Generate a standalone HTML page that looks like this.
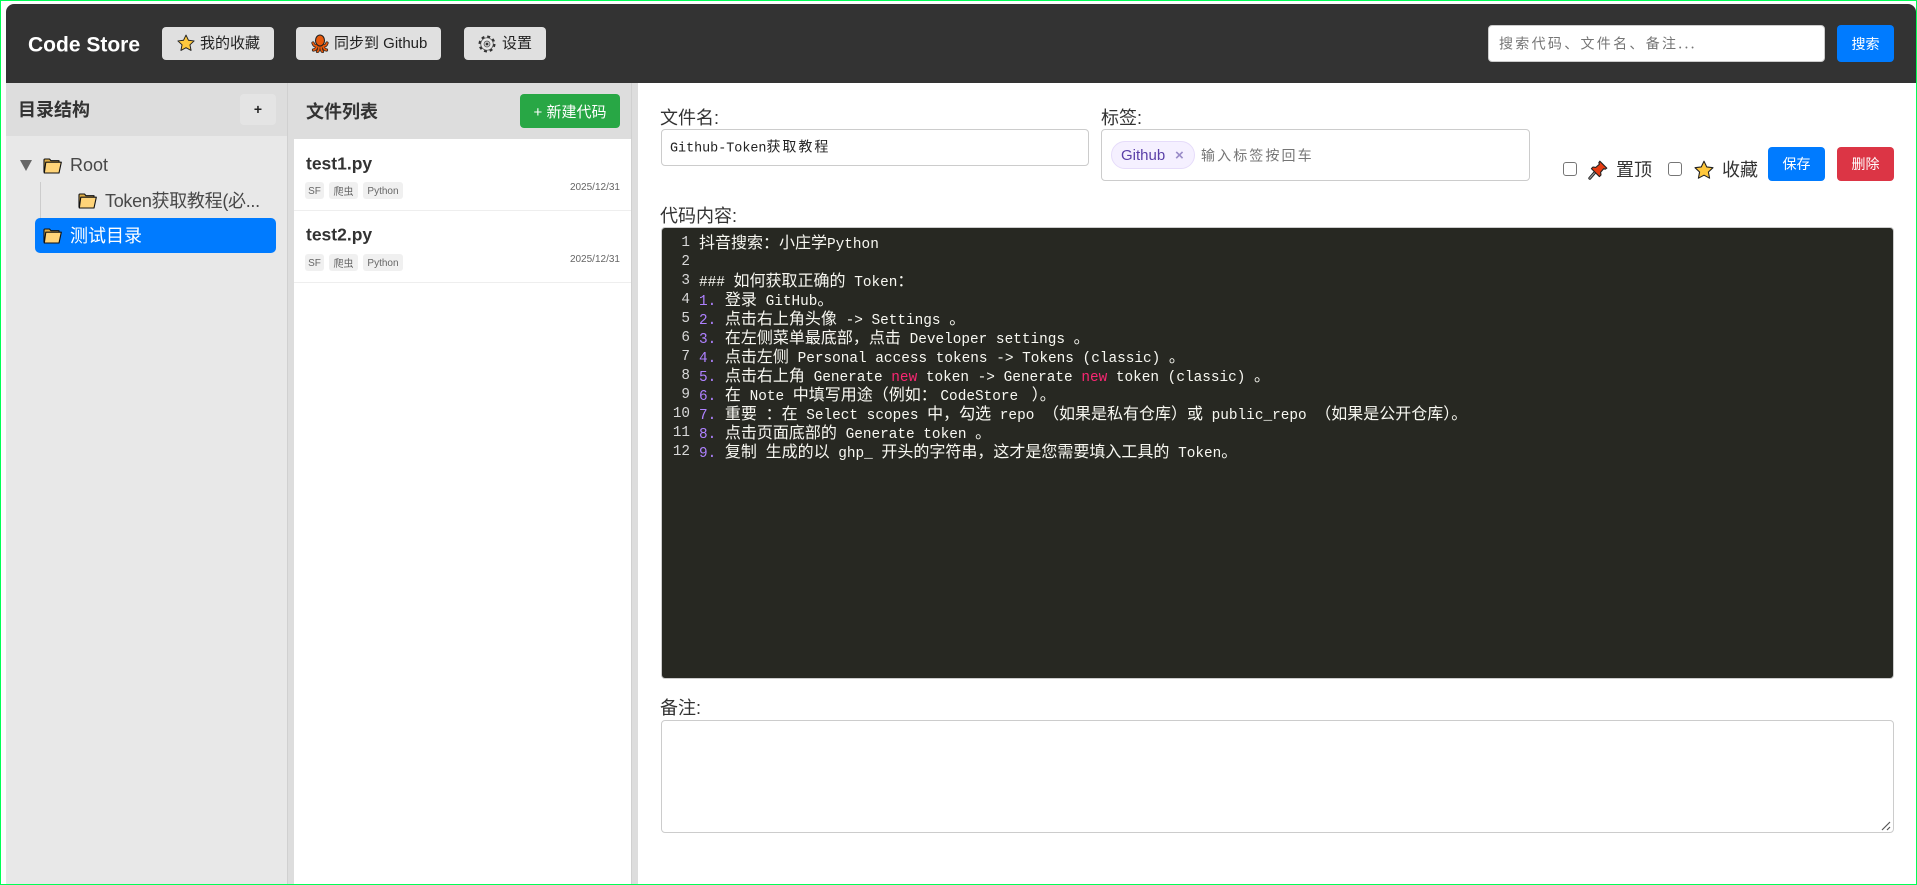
<!DOCTYPE html>
<html lang="zh-CN"><head><meta charset="utf-8"><title>Code Store</title>
<style>
html,body{margin:0;padding:0;width:1917px;height:885px;overflow:hidden;background:#fff}
body{position:relative;font-family:"Liberation Sans","Noto Sans CJK SC",sans-serif;color:#333}
.a{position:absolute;white-space:nowrap;box-sizing:border-box}
.t{position:absolute;white-space:nowrap;transform:translateY(-50%);line-height:1.2}
.btn{border-radius:4px;font-size:14px;display:flex;align-items:center;justify-content:center}
.hb{background:#e0e0e0;color:#222;top:27px;height:33px;border-radius:4px}
.lab{font-size:18px;color:#333}
.box{background:#fff;border:1px solid #ccc;border-radius:4px}
.tag{top:182px;height:17px;background:#f0f0f0;color:#666;font-size:10px;border-radius:3px;display:flex;align-items:center;justify-content:center}
.tl{padding-top:1px}
.tree{font-size:18px;color:#484848}
.cb{width:14px;height:14px;border:1.300px solid #767676;border-radius:3px;background:#fff;top:162px}
.code{position:absolute;left:699px;height:19px;line-height:19px;margin-top:-1px;font-family:"Liberation Mono",monospace;font-size:14.4px;color:#f8f8f2;white-space:pre}
.code i{font-style:normal;font-family:"Noto Sans CJK SC",sans-serif;font-size:16px;font-weight:400}
.code b{font-weight:400;color:#ae81ff}
.code s{text-decoration:none;color:#f92672}
.n{position:absolute;left:661px;width:29px;height:19px;line-height:19px;margin-top:1px;text-align:right;font-family:"Liberation Mono",monospace;font-size:14.3px;color:#d8d8d8}
svg{position:absolute;display:block}
</style></head><body>
<svg width="0" height="0" style="position:absolute"><defs>
<symbol id="star" viewBox="0 0 20 20"><path d="M10 1.200l2.700 5.700 6.300.8-4.600 4.300 1.200 6.200L10 15.200l-5.600 3 1.200-6.200L1 7.700l6.300-.8z" fill="#ffc83d" stroke="#222" stroke-width="1.100" stroke-linejoin="round"/></symbol>
<symbol id="folder" viewBox="0 0 19 16"><path d="M1 14.500V2c0-.6.400-1 1-1h4.500l1.500 1.700h8V4.500" fill="#e0ad45" stroke="#111" stroke-width="1.100" stroke-linejoin="round"/><path d="M1.300 15L2.800 4.200H18.300L16 15z" fill="#ffd479" stroke="#111" stroke-width="1.100" stroke-linejoin="round"/></symbol>
</defs></svg>

<!-- window outline -->
<div class="a" style="left:0;top:0;width:1917px;height:885px;border:1px solid #00ff55;z-index:9;pointer-events:none"></div>

<!-- header -->
<div class="a" style="left:6px;top:4px;width:1910px;height:79px;background:#333;border-radius:8px 8px 0 0"></div>
<div class="t" style="left:28px;top:45px;font-size:21px;font-weight:700;color:#fff">Code Store</div>

<div class="a hb" style="left:162px;width:112px"></div>
<svg style="left:177px;top:34px" width="18" height="18"><use href="#star"/></svg>
<div class="t" style="left:200px;top:44px;font-size:15px;color:#222">我的收藏</div>

<div class="a hb" style="left:296px;width:145px"></div>
<svg style="left:311px;top:34px" width="18" height="19" viewBox="0 0 18 19"><g fill="none" stroke="#222" stroke-width="3.200" stroke-linecap="round"><path d="M7 10C5 13 3 12 2 9"/><path d="M11 10C13 13 15 12 16 9"/><path d="M6.500 11C5.500 15 4 16 2.500 16"/><path d="M11.500 11C12.500 15 14 16 15.500 16"/><path d="M8 11C8 15 7.500 17 6.500 17.500"/><path d="M10 11C10 15 10.500 17 11.500 17.500"/></g><g fill="none" stroke="#e8590c" stroke-width="1.800" stroke-linecap="round"><path d="M7 10C5 13 3 12 2 9"/><path d="M11 10C13 13 15 12 16 9"/><path d="M6.500 11C5.500 15 4 16 2.500 16"/><path d="M11.500 11C12.500 15 14 16 15.500 16"/><path d="M8 11C8 15 7.500 17 6.500 17.500"/><path d="M10 11C10 15 10.500 17 11.500 17.500"/></g><ellipse cx="9" cy="6.500" rx="4.500" ry="5.500" fill="#e8590c" stroke="#222" stroke-width="1.100"/></svg>
<div class="t" style="left:334px;top:44px;font-size:15px;color:#222">同步到 Github</div>

<div class="a hb" style="left:464px;width:82px"></div>
<svg style="left:478px;top:35px" width="18" height="18" viewBox="0 0 18 18"><circle cx="9" cy="9" r="7.300" fill="none" stroke="#333" stroke-width="2.400" stroke-dasharray="2.900 2.830"/><circle cx="9" cy="9" r="6.200" fill="#e8e8e8" stroke="#444" stroke-width=".7"/><circle cx="9" cy="9" r="3" fill="#c4c4c4" stroke="#555" stroke-width=".7"/><circle cx="9" cy="9" r="1.300" fill="#333"/></svg>
<div class="t" style="left:502px;top:44px;font-size:15px;color:#222">设置</div>

<div class="a" style="left:1488px;top:25px;width:337px;height:37px;background:#fff;border:1px solid #ccc;border-radius:4px"></div>
<div class="t" style="left:1499px;top:44px;font-size:14px;letter-spacing:2.300px;color:#757575;font-family:'Noto Sans CJK SC',sans-serif">搜索代码、文件名、备注...</div>
<div class="a btn" style="left:1837px;top:25px;width:57px;height:37px;background:#007bff;color:#fff">搜索</div>

<!-- sidebar -->
<div class="a" style="left:6px;top:83px;width:281px;height:801px;background:#e8e8e8"></div>
<div class="a" style="left:6px;top:83px;width:281px;height:53px;background:#ddd"></div>
<div class="t" style="left:18px;top:111px;font-size:18px;font-weight:700;color:#333">目录结构</div>
<div class="a btn" style="left:240px;top:94px;width:36px;height:31px;background:#e4e4e4;color:#222;font-size:14px;padding-bottom:2px;font-weight:700">+</div>

<svg style="left:20px;top:160px" width="12" height="11"><path d="M0 0H12L6 11z" fill="#666"/></svg>
<svg style="left:43px;top:158px" width="19" height="16"><use href="#folder"/></svg>
<div class="t tree" style="left:70px;top:166px">Root</div>
<div class="a" style="left:40px;top:182px;width:1px;height:36px;background:#ccc"></div>
<svg style="left:78px;top:193px" width="19" height="16"><use href="#folder"/></svg>
<div class="t tree" style="left:105px;top:202px;letter-spacing:-.3px">Token获取教程(必...</div>
<div class="a" style="left:35px;top:218px;width:241px;height:35px;background:#007bff;border-radius:5px"></div>
<svg style="left:43px;top:228px" width="19" height="16"><use href="#folder"/></svg>
<div class="t tree" style="left:70px;top:237px;color:#fff">测试目录</div>

<div class="a" style="left:287px;top:83px;width:7px;height:801px;background:#ddd;border-left:1px solid #d0d0d0"></div>

<!-- file list -->
<div class="a" style="left:294px;top:83px;width:337px;height:56px;background:#ddd"></div>
<div class="t" style="left:306px;top:113px;font-size:18px;font-weight:700;color:#333">文件列表</div>
<div class="a btn" style="left:520px;top:94px;width:100px;height:34px;background:#28a745;color:#fff;font-size:15px">+ 新建代码</div>

<div class="t" style="left:306px;top:164px;font-size:17.500px;font-weight:700;color:#333">test1.py</div>
<div class="a tag tl" style="left:305px;width:19px">SF</div>
<div class="a tag" style="left:329px;width:29px">爬虫</div>
<div class="a tag tl" style="left:363px;width:40px">Python</div>
<div class="t" style="right:1297px;top:188px;font-size:10px;color:#666">2025/12/31</div>
<div class="a" style="left:294px;top:210px;width:337px;height:1px;background:#eee"></div>

<div class="t" style="left:306px;top:235px;font-size:17.500px;font-weight:700;color:#333">test2.py</div>
<div class="a tag tl" style="left:305px;width:19px;top:254px">SF</div>
<div class="a tag" style="left:329px;width:29px;top:254px">爬虫</div>
<div class="a tag tl" style="left:363px;width:40px;top:254px">Python</div>
<div class="t" style="right:1297px;top:260px;font-size:10px;color:#666">2025/12/31</div>
<div class="a" style="left:294px;top:282px;width:337px;height:1px;background:#eee"></div>

<div class="a" style="left:631px;top:83px;width:7px;height:801px;background:#ddd;border-left:1px solid #d0d0d0"></div>

<!-- editor -->
<div class="t lab" style="left:660px;top:119px">文件名:</div>
<div class="a box" style="left:661px;top:129px;width:428px;height:37px"></div>
<div class="t" style="left:670px;top:148px;font-family:'Liberation Mono',monospace;font-size:13.4px;color:#222">Github-Token<span style="font-family:'Noto Sans CJK SC',sans-serif;font-size:14px;letter-spacing:2px">获取教程</span></div>

<div class="t lab" style="left:1101px;top:119px">标签:</div>
<div class="a box" style="left:1101px;top:129px;width:429px;height:52px"></div>
<div class="a" style="left:1111px;top:141px;width:84px;height:28px;background:#f5f0ff;border:1px solid #e6dcfa;border-radius:14px"></div>
<div class="t" style="left:1121px;top:156px;font-size:15px;color:#5a3fa8">Github</div>
<div class="t" style="left:1175px;top:156px;font-size:15px;font-weight:700;color:#9a8cc8">×</div>
<div class="t" style="left:1201px;top:156px;font-size:14px;letter-spacing:2.100px;color:#757575;font-family:'Noto Sans CJK SC',sans-serif">输入标签按回车</div>

<div class="a cb" style="left:1563px"></div>
<svg style="left:1588px;top:160px" width="20" height="20" viewBox="0 0 20 20"><path d="M1.800 18.200L6.800 12.500" stroke="#222" stroke-width="3" stroke-linecap="round"/><path d="M1.800 18.200L6.800 12.500" stroke="#999" stroke-width="1.200" stroke-linecap="round"/><path d="M11.800 1.200L18.800 8.200 17.200 9.200 15.800 8.600 12.600 12.200 13 15 11.400 16.600 3.400 8.600 5 7 7.800 7.400 11.400 4.200 10.800 2.800z" fill="#e63c12" stroke="#222" stroke-width="1.100" stroke-linejoin="round"/></svg>
<div class="t" style="left:1616px;top:171px;font-size:18px;color:#333">置顶</div>
<div class="a cb" style="left:1668px"></div>
<svg style="left:1694px;top:160px" width="20" height="20"><use href="#star"/></svg>
<div class="t" style="left:1722px;top:171px;font-size:18px;color:#333">收藏</div>
<div class="a btn" style="left:1768px;top:147px;width:57px;height:34px;background:#007bff;color:#fff">保存</div>
<div class="a btn" style="left:1837px;top:147px;width:57px;height:34px;background:#dc3545;color:#fff">删除</div>

<div class="t lab" style="left:660px;top:217px">代码内容:</div>
<div class="a" style="left:661px;top:227px;width:1233px;height:452px;background:#272822;border:1px solid #ccc;border-radius:4px"></div>

<div class="n" style="top:233px">1</div><div class="code" style="top:233px"><i>抖音搜索：小庄学</i>Python</div>
<div class="n" style="top:252px">2</div>
<div class="n" style="top:271px">3</div><div class="code" style="top:271px">### <i>如何获取正确的</i> Token<i>：</i></div>
<div class="n" style="top:290px">4</div><div class="code" style="top:290px"><b>1.</b> <i>登录</i> GitHub<i>。</i></div>
<div class="n" style="top:309px">5</div><div class="code" style="top:309px"><b>2.</b> <i>点击右上角头像</i> -&gt; Settings <i>。</i></div>
<div class="n" style="top:328px">6</div><div class="code" style="top:328px"><b>3.</b> <i>在左侧菜单最底部，点击</i> Developer settings <i>。</i></div>
<div class="n" style="top:347px">7</div><div class="code" style="top:347px"><b>4.</b> <i>点击左侧</i> Personal access tokens -&gt; Tokens (classic) <i>。</i></div>
<div class="n" style="top:366px">8</div><div class="code" style="top:366px"><b>5.</b> <i>点击右上角</i> Generate <s>new</s> token -&gt; Generate <s>new</s> token (classic) <i>。</i></div>
<div class="n" style="top:385px">9</div><div class="code" style="top:385px"><b>6.</b> <i>在</i> Note <i>中填写用途（例如：</i> <span style="margin-left:-5px;margin-right:5px">CodeStore</span> <i>）。</i></div>
<div class="n" style="top:404px">10</div><div class="code" style="top:404px"><b>7.</b> <i>重要</i> <i>：在</i> Select scopes <i>中，勾选</i> repo <i>（如果是私有仓库）或</i> public_repo <i>（如果是公开仓库）。</i></div>
<div class="n" style="top:423px">11</div><div class="code" style="top:423px"><b>8.</b> <i>点击页面底部的</i> Generate token <i>。</i></div>
<div class="n" style="top:442px">12</div><div class="code" style="top:442px"><b>9.</b> <i>复制</i> <i>生成的以</i> ghp_ <i>开头的字符串，这才是您需要填入工具的</i> Token<i>。</i></div>

<div class="t lab" style="left:660px;top:709px">备注:</div>
<div class="a box" style="left:661px;top:720px;width:1233px;height:113px"></div>
<svg style="left:1881px;top:821px" width="10" height="10"><path d="M1 9L9 1M6 9L9 6" stroke="#555" stroke-width="1.200"/></svg>
</body></html>
